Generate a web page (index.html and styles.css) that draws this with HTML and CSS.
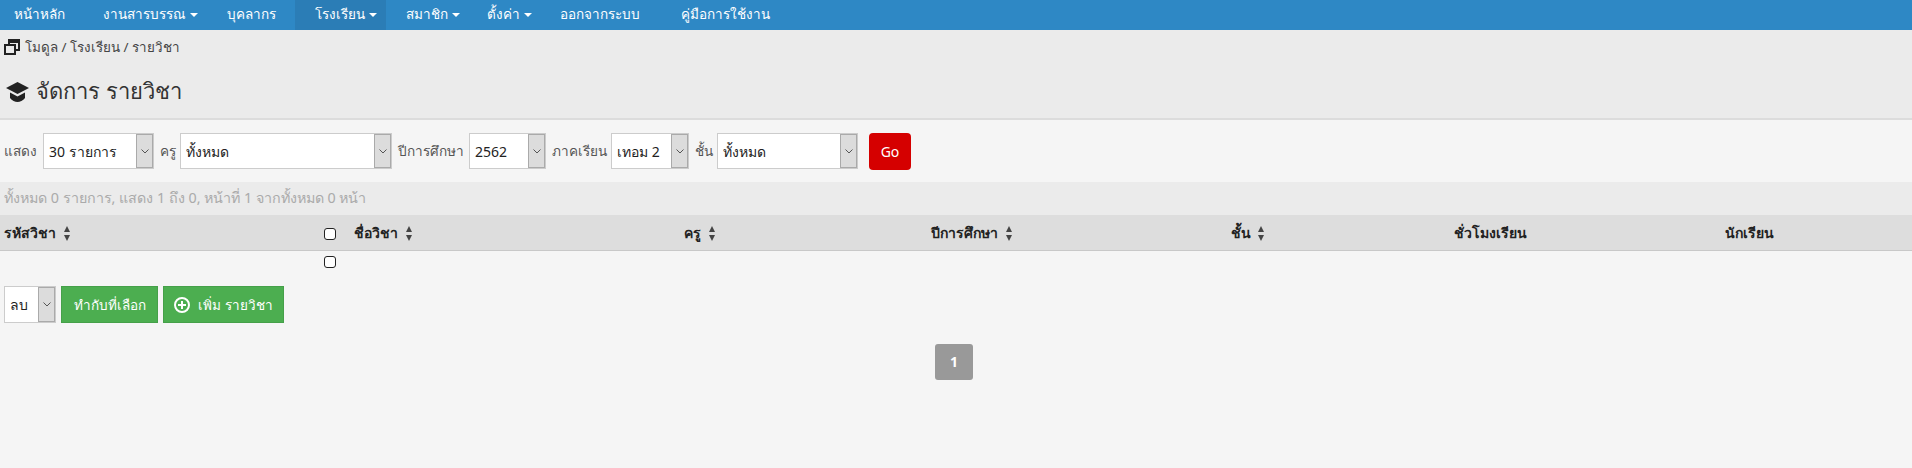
FILE: index.html
```html
<!DOCTYPE html>
<html lang="th">
<head>
    <meta charset="UTF-8">
    <title>จัดการ รายวิชา</title>
    <link rel="stylesheet" href="styles.css">
</head>
<body>
    <nav class="topnav">
        <a class="nav-home" href="#">หน้าหลัก</a>
        <a class="nav-study" href="#">งานสารบรรณ <i class="caret"></i></a>
        <a class="nav-staff" href="#">บุคลากร</a>
        <a class="nav-school active" href="#">โรงเรียน <i class="caret"></i></a>
        <a class="nav-member" href="#">สมาชิก <i class="caret"></i></a>
        <a class="nav-setting" href="#">ตั้งค่า <i class="caret"></i></a>
        <a class="nav-logout" href="#">ออกจากระบบ</a>
        <a class="nav-manual" href="#">คู่มือการใช้งาน</a>
    </nav>

    <header class="page-head">
        <div class="breadcrumb">
            <svg class="icon-crumb" viewBox="0 0 16 16" width="16" height="16">
                <path fill="none" stroke="#222" stroke-width="2" d="M1 6h10v9H1z"/>
                <path fill="#222" d="M4 0h12v12h-4v-2h2V4H6v1H4z"/>
            </svg>
            <span>โมดูล / โรงเรียน / รายวิชา</span>
        </div>
        <h1>
            <svg class="icon-cap" viewBox="0 0 23 20" width="23" height="20">
                <path fill="#222" d="M11.500 0 23 6 11.500 12 0 6z"/>
                <path fill="#222" d="M4 10.500 11.500 14.500 19 10.500V16c-2 2.500-5 4-7.500 4S6 18.500 4 16z"/>
            </svg>
            จัดการ รายวิชา
        </h1>
    </header>

    <form class="filters">
        <label class="l-show">แสดง</label>
        <div class="sel sel-show"><select><option>30 รายการ</option></select><span class="sel-btn"><svg viewBox="0 0 8 5" width="8" height="5"><path d="M.5.500 4 4 7.500.500" fill="none" stroke="#555"/></svg></span></div>
        <label class="l-teacher">ครู</label>
        <div class="sel sel-teacher"><select><option>ทั้งหมด</option></select><span class="sel-btn"><svg viewBox="0 0 8 5" width="8" height="5"><path d="M.5.500 4 4 7.500.500" fill="none" stroke="#555"/></svg></span></div>
        <label class="l-year">ปีการศึกษา</label>
        <div class="sel sel-year"><select><option>2562</option></select><span class="sel-btn"><svg viewBox="0 0 8 5" width="8" height="5"><path d="M.5.500 4 4 7.500.500" fill="none" stroke="#555"/></svg></span></div>
        <label class="l-term">ภาคเรียน</label>
        <div class="sel sel-term"><select><option>เทอม 2</option></select><span class="sel-btn"><svg viewBox="0 0 8 5" width="8" height="5"><path d="M.5.500 4 4 7.500.500" fill="none" stroke="#555"/></svg></span></div>
        <label class="l-level">ชั้น</label>
        <div class="sel sel-level"><select><option>ทั้งหมด</option></select><span class="sel-btn"><svg viewBox="0 0 8 5" width="8" height="5"><path d="M.5.500 4 4 7.500.500" fill="none" stroke="#555"/></svg></span></div>
        <button type="button" class="btn-go">Go</button>
    </form>

    <div class="info">ทั้งหมด 0 รายการ, แสดง 1 ถึง 0, หน้าที่ 1 จากทั้งหมด 0 หน้า</div>

    <table class="grid">
        <colgroup>
            <col class="c-code"><col class="c-check"><col class="c-name"><col class="c-teacher"><col class="c-year"><col class="c-level"><col class="c-hour"><col class="c-student">
        </colgroup>
        <thead>
            <tr>
                <th>รหัสวิชา <i class="sort"></i></th>
                <th class="center"><span class="check"></span></th>
                <th class="th-name">ชื่อวิชา <i class="sort"></i></th>
                <th class="center">ครู <i class="sort"></i></th>
                <th class="center">ปีการศึกษา <i class="sort"></i></th>
                <th class="center">ชั้น <i class="sort"></i></th>
                <th class="center">ชั่วโมงเรียน</th>
                <th class="center th-student">นักเรียน</th>
            </tr>
        </thead>
        <tbody>
            <tr>
                <td></td>
                <td class="center"><span class="check"></span></td>
                <td colspan="6"></td>
            </tr>
        </tbody>
    </table>

    <div class="actions">
        <div class="sel sel-action"><select><option>ลบ</option></select><span class="sel-btn"><svg viewBox="0 0 8 5" width="8" height="5"><path d="M.5.500 4 4 7.500.500" fill="none" stroke="#555"/></svg></span></div>
        <button type="button" class="btn-green btn-apply">ทำกับที่เลือก</button>
        <button type="button" class="btn-green btn-add">
            <svg viewBox="0 0 16 16" width="16" height="16"><circle cx="8" cy="8" r="7" fill="none" stroke="#fff" stroke-width="2"/><path d="M8 4v8M4 8h8" stroke="#fff" stroke-width="2"/></svg>
            เพิ่ม รายวิชา
        </button>
    </div>

    <div class="pager"><span class="page-on">1</span></div>
</body>
</html>
```

FILE: styles.css
```css
body {
    margin: 0;
    background-color: #f5f5f5;
    font-family: "Noto Sans", "Liberation Sans", sans-serif;
    font-size: 14px;
    color: #333;
}

.topnav {
    display: flex;
    height: 30px;
    background-color: #2e88c5;
}

.topnav a {
    display: block;
    box-sizing: border-box;
    line-height: 28px;
    color: #fff;
    text-decoration: none;
    font-size: 13.5px;
    white-space: nowrap;
}

.nav-home { padding-left: 14px; width: 103px; }
.nav-study { width: 124px; }
.nav-staff { width: 68px; }
.nav-school { padding-left: 20px; width: 91px; }
.nav-member { padding-left: 20px; width: 101px; }
.nav-setting { width: 73px; }
.nav-logout { width: 121px; }
.nav-manual { width: 120px; }

.topnav .active {
    background-color: #2b7db6;
}

.caret {
    display: inline-block;
    width: 0;
    height: 0;
    vertical-align: middle;
    border-left: 4px solid transparent;
    border-right: 4px solid transparent;
    border-top: 4px solid #fff;
}

.page-head {
    height: 88px;
    padding: 0 4px;
    background-color: #ebebeb;
    border-bottom: 2px solid #dcdcdc;
}

.breadcrumb {
    display: flex;
    align-items: center;
    gap: 5px;
    height: 30px;
    padding-top: 2px;
    font-size: 13.4px;
    color: #444;
}

.page-head h1 {
    display: flex;
    align-items: center;
    gap: 7px;
    margin: 12px 0 0 2px;
    font-size: 22px;
    font-weight: normal;
    color: #333;
}

.filters {
    display: flex;
    align-items: center;
    height: 62px;
    padding-left: 4px;
}

.filters label {
    flex: none;
    font-size: 13.6px;
    white-space: nowrap;
    color: #555;
}

.l-show { width: 39px; }
.l-teacher { width: 20px; }
.l-year { width: 71px; }
.l-term { width: 59px; }
.l-level { width: 22px; }

.sel {
    position: relative;
    flex: none;
    height: 36px;
    margin-right: 6px;
    background-color: #fff;
    border: 1px solid #ccc;
    box-sizing: border-box;
}

.sel select {
    width: 100%;
    height: 100%;
    padding: 0 0 0 5px;
    border: 0;
    background: transparent;
    appearance: none;
    font-family: inherit;
    font-size: 14px;
    color: #222;
}

.sel-btn {
    position: absolute;
    top: 0;
    right: 0;
    bottom: 0;
    display: flex;
    align-items: center;
    justify-content: center;
    width: 15px;
    background-color: #dcdcdc;
    border: 1px solid #aaa;
}

.sel-show { width: 111px; }
.sel-teacher { width: 212px; }
.sel-year { width: 77px; }
.sel-term { width: 78px; }
.sel-level { width: 141px; }
.sel-action { width: 52px; height: 37px; }

.btn-go {
    width: 42px;
    height: 37px;
    margin-left: 5px;
    background-color: #d50000;
    border: 0;
    border-radius: 4px;
    color: #fff;
    font-family: inherit;
    font-size: 14px;
}

.info {
    height: 33px;
    line-height: 31px;
    padding-left: 4px;
    background-color: #ebebeb;
    font-size: 14.3px;
    color: #aaa;
}

.grid {
    width: 100%;
    table-layout: fixed;
    border-collapse: collapse;
}

.c-code { width: 316px; }
.c-check { width: 28px; }
.c-name { width: 220px; }
.c-teacher { width: 272px; }
.c-year { width: 272px; }
.c-level { width: 280px; }
.c-hour { width: 204px; }
.c-student { width: 320px; }

.grid th {
    height: 35px;
    padding: 0 4px;
    background-color: #dddddd;
    border-bottom: 1px solid #c8c8c8;
    text-align: left;
    font-size: 14px;
    color: #222;
}

.grid .th-name {
    padding-left: 10px;
}

.grid .th-student {
    padding-right: 10px;
}

.grid td {
    height: 18px;
    padding: 0;
}

.grid .center {
    text-align: center;
}

.check {
    display: inline-block;
    width: 10px;
    height: 10px;
    vertical-align: middle;
    background-color: #fff;
    border: 1px solid #222;
    border-radius: 3px;
}

.sort {
    display: inline-block;
    position: relative;
    width: 7px;
    height: 15px;
    margin-left: 4px;
    vertical-align: middle;
}

.sort::before,
.sort::after {
    content: "";
    position: absolute;
    left: 0;
    border-left: 3.5px solid transparent;
    border-right: 3.5px solid transparent;
}

.sort::before {
    top: 0;
    border-bottom: 6px solid #444;
}

.sort::after {
    bottom: 0;
    border-top: 6px solid #444;
}

.actions {
    display: flex;
    align-items: center;
    gap: 5px;
    padding: 16px 0 0 4px;
}

.actions .sel {
    margin-right: 0;
}

.btn-green {
    display: flex;
    align-items: center;
    justify-content: center;
    gap: 8px;
    height: 37px;
    padding: 0;
    background-color: #4cae50;
    border: 1px solid #45a049;
    color: #fff;
    font-family: inherit;
    font-size: 13.5px;
}

.btn-apply { width: 97px; }
.btn-add { width: 121px; }

.pager {
    display: flex;
    justify-content: center;
    padding: 21px 4px 0 0;
}

.page-on {
    width: 38px;
    height: 36px;
    line-height: 36px;
    background-color: #999;
    border-radius: 3px;
    color: #fff;
    font-weight: bold;
    text-align: center;
}
```
